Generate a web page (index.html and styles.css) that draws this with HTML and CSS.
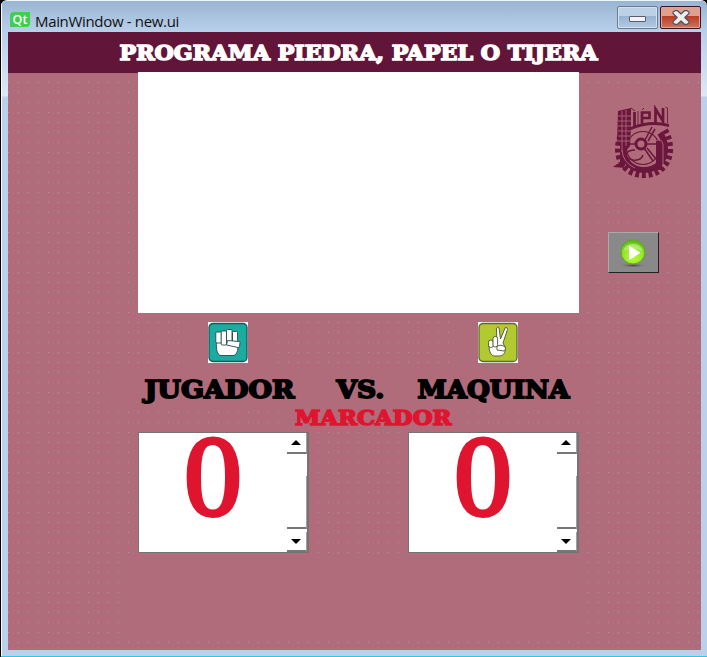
FILE: index.html
```
<!DOCTYPE html>
<html lang="es">
<head>
<meta charset="utf-8">
<title>MainWindow - new.ui</title>
<link rel="stylesheet" href="styles.css">
</head>
<body>
<div class="window">
  <header class="titlebar">
    <span class="qt">Qt</span>
    <span class="caption">MainWindow - new.ui</span>
    <div class="btn min"><i></i></div>
    <div class="btn close">
      <svg width="18" height="15" viewBox="0 0 18 15"><path d="M1 2L3 .7h2.500L9 4 12.500.7H15L17 2v1.500L12.800 7.500 17 11.500V13l-2 1.300h-2.500L9 11l-3.500 3.300H3L1 13v-1.500L5.200 7.500 1 3.500z" fill="#eee" stroke="#505060" stroke-width="1.200" stroke-linejoin="round"/></svg>
    </div>
  </header>
  <main class="canvas">
    <svg class="banner" width="693" height="41"><text class="slab white" x="111.500" y="28" font-size="20.500" textLength="478" lengthAdjust="spacingAndGlyphs">PROGRAMA PIEDRA, PAPEL O TIJERA</text></svg>
    <div class="columns">
      <section class="center">
        <div class="screen"></div>
        <div class="hands">
          <div class="hand"><svg width="40" height="41" viewBox="0 0 40 41">
            <rect width="40" height="41" fill="#fff"/><rect x="1" y="1.500" width="38" height="38" rx="4" fill="#1aaba1" stroke="#285054" stroke-width="1.300"/>
            <g fill="#fff" stroke="#25494b" stroke-width=".9" stroke-linejoin="round"><path d="M8.500 20C8 27 9 33 13 33.500H26C29 32 30 29 30 23L23 18z"/><rect x="7.800" y="10" width="5.600" height="11" rx="1"/><rect x="24.500" y="9.500" width="5" height="10" rx="1"/><rect x="18.500" y="7.500" width="5.500" height="12.500" rx="1"/><rect x="13.200" y="9" width="5.300" height="14" rx="1"/><path d="M19.500 18.500l11.500 1q1 0 1 1l-.5 4q-.3 1.300-1.500 1L18.500 23z"/></g>
          </svg></div>
          <div class="hand"><svg width="40" height="41" viewBox="0 0 40 41">
            <rect width="40" height="41" fill="#fff"/><rect x="1" y="1.500" width="38" height="38" rx="4" fill="#b2ca30" stroke="#5c6636" stroke-width="1.300"/>
            <g fill="#fff" stroke="#4a5230" stroke-width=".9" stroke-linejoin="round"><path d="M11 23C11 30 13 34 17 34H22C26 33 27 31 27.500 26L25 21 29.500 7.500Q29.500 5 27.300 5.500L22.500 17 21 6Q20 4 18.400 6L19 21z"/><rect x="10.500" y="18" width="4.800" height="7.500" rx="2.300"/><rect x="15" y="14.500" width="4.600" height="10.500" rx="2.200"/><path d="M19 24q4-2 8 .5 1.500 3-1 4.500l-7-1z"/></g>
          </svg></div>
        </div>
        <svg class="names" width="488" height="40">
          <g class="slab" font-size="25"><text x="40.500" y="29.500" textLength="150" lengthAdjust="spacingAndGlyphs">JUGADOR</text><text x="232.500" y="29.500" textLength="48" lengthAdjust="spacingAndGlyphs">VS.</text><text x="313.500" y="29.500" textLength="152" lengthAdjust="spacingAndGlyphs">MAQUINA</text></g>
        </svg>
        <svg class="marker" width="180" height="24"><text class="slab red" x="12" y="17.300" font-size="20" textLength="156.500" lengthAdjust="spacingAndGlyphs">MARCADOR</text></svg>
        <div class="scores">
          <div class="score"><span class="digit">0</span><div class="scroll"><div class="step"><b class="up"></b></div><div class="thumb"></div><div class="step down"><b class="dn"></b></div></div></div>
          <div class="score"><span class="digit">0</span><div class="scroll"><div class="step"><b class="up"></b></div><div class="thumb"></div><div class="step down"><b class="dn"></b></div></div></div>
        </div>
        <div class="status"></div>
      </section>
      <aside class="side">
        <div class="crest"><svg width="62" height="73" viewBox="0 0 62 73">
          <g fill="none" stroke="#6b163c">
            <path d="M53 24q5 8 5 19c0 16-11 26-26 26S6 59 6 43q0-9 4-16" stroke-width="6" stroke-dasharray="3.800 2.800"/>
            <path d="M48 27q5 7 5 16c0 13-9 21-21 21S11 55 11 43" stroke-width="6"/>
            <circle cx="31" cy="42" r="16.500" stroke-width="1.200"/>
            <circle cx="29" cy="38" r="5" stroke-width="3"/>
            <path d="M34 38h13M32 42l9 13M35 42l9 11M33 34l7-13M36 35l7-12M24 38h-9M23 44q-7 0-9 4t7 6q8 1 10-5" stroke-width="1.500"/>
          </g>
          <path d="M6 5l13-3v20l-1 18-5 6v14H8V38H5z" fill="#6b163c"/>
          <path d="M10 5v41M14 4v36M6 10h13M6 15h13M6 20h13M6 25h13M6 30h13M5 35h13" fill="none" stroke="#b06c7a" stroke-width=".8"/>
          <path d="M19 24q19-8 38-3v-3q-19-5-38 3z" fill="#6b163c"/>
          <g fill="none" stroke="#6b163c" stroke-width="2.700"><path d="M22.500 6v15M30 19V6.500h7.500v5.500H30M43.500 17V3l7.500 12V2"/></g>
          <path d="M19 2l4 3M26 5v14M30 4l2-2M53.500 1l2 1v15" fill="none" stroke="#6b163c" stroke-width=".9"/>
          <path d="M44 33v28h6V36M1 61l4-3h6l2 4zM40 64l4-4h7l1 4z" fill="#6b163c"/>
          <path d="M43 35q7-4 8 4v22M10 44q1 13 13 18" fill="none" stroke="#b06c7a" stroke-width=".9"/>
        </svg></div>
        <div class="play"><svg width="30" height="30" viewBox="0 0 30 30">
          <defs><radialGradient id="lime" cx=".5" cy=".7" r=".65"><stop offset="0" stop-color="#b9ff35"/><stop offset=".65" stop-color="#94e62a"/><stop offset="1" stop-color="#5cba13"/></radialGradient>
          <radialGradient id="shade"><stop offset="0" stop-color="#444"/><stop offset="1" stop-color="#888" stop-opacity="0"/></radialGradient></defs>
          <ellipse cx="15" cy="27.500" rx="15" ry="2.300" fill="url(#shade)"/><circle cx="15" cy="14" r="12" fill="url(#lime)" stroke="#5cab17"/><path d="M5 13a10.500 10.500 0 0 1 20 0q-10-5-20 0" fill="#fff" opacity=".3"/><path d="M11 7.500v14.500l11.500-7.200z" fill="#fff"/>
        </svg></div>
      </aside>
    </div>
  </main>
</div>
</body>
</html>
```

FILE: styles.css
```
* { box-sizing: border-box; }
body { margin: 0; width: 707px; height: 657px; overflow: hidden; background: #000; }
svg { display: block; overflow: visible; }
.window {
  margin-left: 1px; width: 706px; height: 657px; padding-left: 7px;
  border-top: 1px solid #eef7fc; border-bottom: 1px solid #27cbe6;
  border-radius: 6px 6px 0 0;
  background: linear-gradient(#fff, #fff) 0 0 / 1px 100% no-repeat, linear-gradient(#9ab5d2 0, #b9d0ea 31px, #dce8f5 95px, #bad0eb 96px);
}
.titlebar { height: 31px; display: flex; align-items: flex-start; padding: 5px 0 0 2px; }
.qt {
  width: 20px; height: 15px; margin-top: 6px; background: #41cd52; color: #fff;
  border-radius: 4px 0 4px 0; font: 600 12.5px/15px "Open Sans", sans-serif; text-align: center;
}
.caption { margin: 5px 0 0 5px; font: 15px/20px "Open Sans", sans-serif; letter-spacing: -.33px; color: #111; flex: 1; }
.btn {
  width: 41px; height: 23px; border: 1px solid #6a7b94; border-radius: 2px; margin-right: 2px;
  display: flex; align-items: center; justify-content: center; box-shadow: inset 0 0 0 1px #d3e1f0;
  background: linear-gradient(#bdd0e4 43%, #98b2cf 44%, #b2cae4);
}
.min i { width: 17px; height: 6px; margin-top: 2px; background: #f4f4f4; border: 1px solid #555e70; border-radius: 1px; }
.close { margin-right: 6px; border-color: #43101d; box-shadow: inset 0 0 0 1px #e8a093; background: linear-gradient(#dfa090 43%, #ba3c23 44%, #cf7461); }
.canvas {
  width: 693px; height: 618px; background-color: #b06c7a;
  background-image: linear-gradient(to right, transparent 1px, #b06c7a 1px), linear-gradient(#91a19b 1px, #b06c7a 1px);
  background-size: 10px 10px;
}
.banner { background: #611539; }
.slab { font-family: "DejaVu Serif", serif; font-weight: bold; fill: #000; stroke: #000; stroke-width: 1.8px; }
.white { fill: #fff; stroke: #fff; stroke-width: 1.5px; }
.red { fill: #df1530; stroke: #df1530; stroke-width: 1.5px; }
.columns { display: flex; height: 577px; padding-left: 130px; }
.center { width: 441px; margin-top: -1px; }
.screen { height: 241px; background: #fff; }
.hands { display: flex; gap: 180px; padding: 5px 0 0 45px; }
.hand { width: 90px; height: 50px; background: #b06c7a; padding: 4px 25px; }
.names { margin-left: -34px; background: #b06c7a; }
.marker { margin-left: 145px; background: #b06c7a; }
.scores { display: flex; justify-content: space-between; }
.score { width: 171px; height: 121px; background: #fff; border: 1px solid #747474; border-right-width: 2px; display: flex; }
.digit { width: 148px; text-align: center; font: 115px/87px "Liberation Serif", serif; color: #df1530; -webkit-text-stroke: 4px #df1530; }
.scroll { width: 20px; display: flex; flex-direction: column; }
.step { height: 21px; border-right: 1px solid #a0a0a0; border-bottom: 2px solid #777; display: flex; align-items: center; justify-content: center; padding-right: 1px; }
.thumb { height: 53px; margin-top: 22px; border-right: 1px solid #a0a0a0; border-bottom: 2px solid #777; }
.down { margin-top: 3px; height: 20px; }
.up, .dn { border: 5px solid transparent; }
.up { border-top: 0; border-bottom-color: #000; }
.dn { border-bottom: 0; border-top-color: #000; }
.status { width: 460px; height: 81px; margin: 4px 0 0 -15px; background: #b06c7a; }
.side { width: 122px; padding-top: 15px; }
.crest { width: 109px; height: 112px; margin-left: 13px; padding: 18px 0 0 20px; background: #b06c7a; }
.play {
  width: 51px; height: 41px; margin: 32px 0 0 29px; background: #898989; padding-right: 1px;
  border: 1px solid #aaa; border-right: 1px solid #222; border-bottom: 1px solid #222;
  display: flex; align-items: center; justify-content: center;
}
```
